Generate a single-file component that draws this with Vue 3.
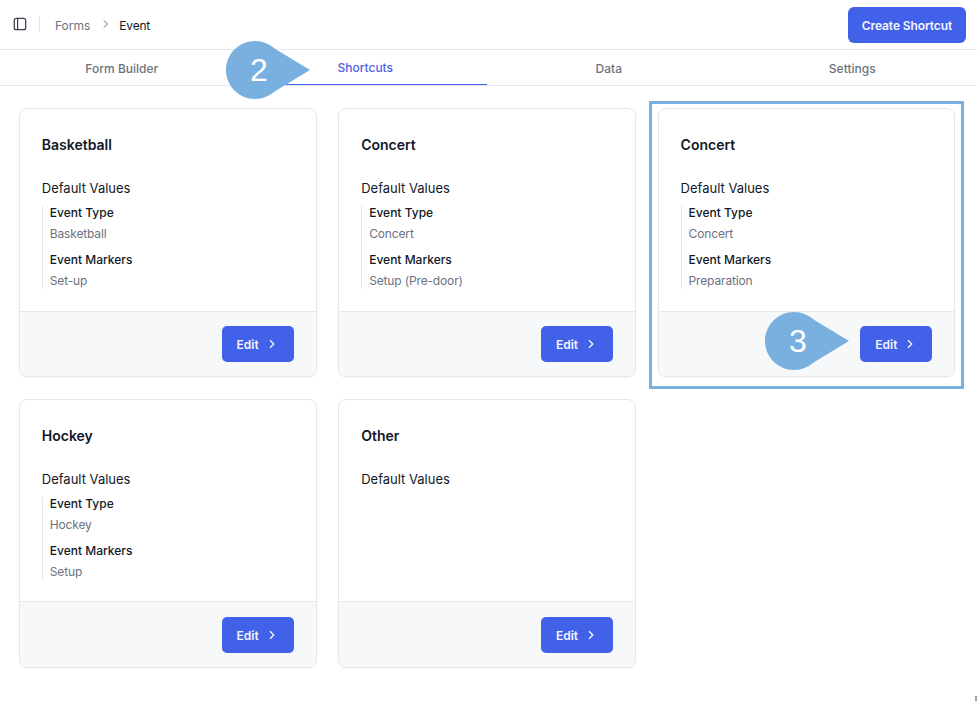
<script setup>
const tabs = [
  { label: 'Form Builder' },
  { label: 'Shortcuts', active: true },
  { label: 'Data' },
  { label: 'Settings' },
]
const cards = [
  { title: 'Basketball', values: [['Event Type', 'Basketball'], ['Event Markers', 'Set-up']] },
  { title: 'Concert', values: [['Event Type', 'Concert'], ['Event Markers', 'Setup (Pre-door)']] },
  { title: 'Concert', values: [['Event Type', 'Concert'], ['Event Markers', 'Preparation']] },
  { title: 'Hockey', values: [['Event Type', 'Hockey'], ['Event Markers', 'Setup']] },
  { title: 'Other', values: [] },
]
</script>

<template>
  <div class="page">
    <header class="topbar">
      <div class="crumbs">
        <svg class="panel-icon" width="14" height="14" viewBox="0 0 14 14" fill="none" stroke="#374151" stroke-width="1.25">
          <rect x="1.3" y="1.3" width="11.4" height="11.4" rx="2" />
          <path d="M4.6 1.3v11.4" />
        </svg>
        <span class="divider"></span>
        <span class="crumb-parent">Forms</span>
        <svg class="crumb-chevron" width="8" height="10" viewBox="0 0 8 10" fill="none" stroke="#6b7280" stroke-width="1">
          <path d="M2 1.5 5.5 5 2 8.5" />
        </svg>
        <span class="crumb-current">Event</span>
      </div>
      <button class="create">Create Shortcut</button>
    </header>

    <nav class="tabs">
      <div v-for="tab in tabs" :key="tab.label" class="tab" :class="{ active: tab.active }">{{ tab.label }}</div>
    </nav>

    <main class="grid">
      <article v-for="(card, i) in cards" :key="i" class="card">
        <div class="body">
          <h3>{{ card.title }}</h3>
          <div class="defaults">Default Values</div>
          <dl v-if="card.values.length" class="values">
            <div v-for="row in card.values" :key="row[0]" class="value-row">
              <dt>{{ row[0] }}</dt>
              <dd>{{ row[1] }}</dd>
            </div>
          </dl>
        </div>
        <footer class="foot">
          <button class="edit">
            Edit
            <svg width="10" height="10" viewBox="0 0 10 10" fill="none" stroke="#fff" stroke-width="1.2">
              <path d="M3 1.3 6.8 5 3 8.7" />
            </svg>
          </button>
        </footer>
      </article>
    </main>

    <div class="highlight"></div>

    <div class="callout callout-two">
      <svg width="84" height="60" viewBox="0 0 84 60"><path d="M29 1C13 1 0 14 0 30s13 29 29 29c8 0 14-3 22-9L84 30 51 10C43 4 37 1 29 1Z" fill="#7ab0df" /></svg>
      <span>2</span>
    </div>
    <div class="callout callout-three">
      <svg width="84" height="60" viewBox="0 0 84 60"><path d="M29 1C13 1 0 14 0 30s13 29 29 29c8 0 14-3 22-9L84 30 51 10C43 4 37 1 29 1Z" fill="#7ab0df" /></svg>
      <span>3</span>
    </div>
    <div class="grip"></div>
  </div>
</template>

<style>
html, body { margin: 0; background: #fff; }
</style>

<style scoped>
.page {
  position: relative;
  width: 977px;
  height: 701px;
  overflow: hidden;
  background: #fff;
  font-family: Inter, "Noto Sans", sans-serif;
  color: #111827;
}
.topbar {
  box-sizing: border-box;
  height: 50px;
  display: flex;
  align-items: center;
  justify-content: space-between;
  padding: 0 11px 0 13px;
  border-bottom: 1px solid #e5e7eb;
}
.crumbs { display: flex; align-items: center; padding-top: 1px; }
.panel-icon { margin: 0 5px 3px 0; }
.divider { width: 1px; height: 16px; background: #e5e7eb; margin: 0 15px 2px 7px; }
.crumb-parent { font-size: 12px; color: #6b7280; }
.crumb-chevron { margin: 0 9px 3px 12px; }
.crumb-current { font-size: 12px; letter-spacing: -0.2px; color: #111827; }
.create {
  width: 118px;
  height: 36px;
  border: 0;
  border-radius: 6px;
  background: #4162e8;
  color: #f3f5ff;
  font: 600 12px Inter, sans-serif;
  letter-spacing: -0.1px;
  padding: 0;
  margin-top: 1px;
}
.tabs {
  box-sizing: border-box;
  height: 36px;
  display: grid;
  grid-template-columns: repeat(4, 1fr);
  padding-right: 3px;
  border-bottom: 1px solid #e5e7eb;
}
.tab {
  display: flex;
  align-items: center;
  justify-content: center;
  font-size: 12px;
  font-weight: 500;
  color: #6b7280;
  padding-top: 2px;
}
.tab.active {
  color: #4f5fe6;
  border-bottom: 1px solid #4162e8;
  padding-top: 0;
}
.grid {
  display: grid;
  grid-template-columns: repeat(3, 297.6px);
  grid-template-rows: 269.2px 269.2px;
  column-gap: 21.8px;
  row-gap: 21.5px;
  padding: 22px 0 0 19px;
}
.card {
  box-sizing: border-box;
  display: flex;
  flex-direction: column;
  border: 1px solid #e5e7eb;
  border-radius: 8px;
  overflow: hidden;
  box-shadow: 0 1px 2px rgba(17, 24, 39, 0.04);
}
.body { flex: 1; padding: 26px 22px 0 21.8px; }
h3 {
  margin: 0;
  font-size: 14px;
  line-height: 20px;
  font-weight: 600;
  color: #111827;
}
.defaults { margin-top: 23px; font-size: 13px; line-height: 20px; color: #111827; }
.values {
  margin: 8px 0 0;
  padding: 1px 0 0 7px;
  border-left: 1px solid #e5e7eb;
  display: flex;
  flex-direction: column;
  gap: 12px;
}
dt { font-size: 12px; line-height: 12px; font-weight: 500; color: #111827; }
dd { margin: 7px 0 0; font-size: 12px; line-height: 16px; letter-spacing: -0.15px; color: #6b7280; }
.foot {
  box-sizing: border-box;
  height: 65.5px;
  flex: none;
  display: flex;
  align-items: center;
  justify-content: flex-end;
  padding: 0 22px;
  background: #f7f8fa;
  border-top: 1px solid #e5e7eb;
}
.edit {
  width: 72px;
  height: 36px;
  display: flex;
  align-items: center;
  justify-content: center;
  gap: 8px;
  border: 0;
  border-radius: 5px;
  padding: 1px 2px 0 0;
  background: #4162e8;
  color: #f3f5ff;
  font: 600 12px Inter, sans-serif;
}
.highlight {
  position: absolute;
  left: 649px;
  top: 101px;
  width: 315px;
  height: 288px;
  box-sizing: border-box;
  border: 3px solid #7ab0df;
}
.callout { position: absolute; width: 84px; height: 60px; }
.callout svg { display: block; }
.callout span {
  position: absolute;
  left: 0;
  top: 0;
  width: 66px;
  height: 60px;
  display: flex;
  align-items: center;
  justify-content: center;
  font: 32px "Liberation Sans", Arial, sans-serif;
  color: #fff;
}
.callout-two { left: 226px; top: 40px; }
.callout-three { left: 765px; top: 311px; }
.grip { position: absolute; right: 0; bottom: 0; width: 2px; height: 5px; background: #a3a3a3; }
</style>
